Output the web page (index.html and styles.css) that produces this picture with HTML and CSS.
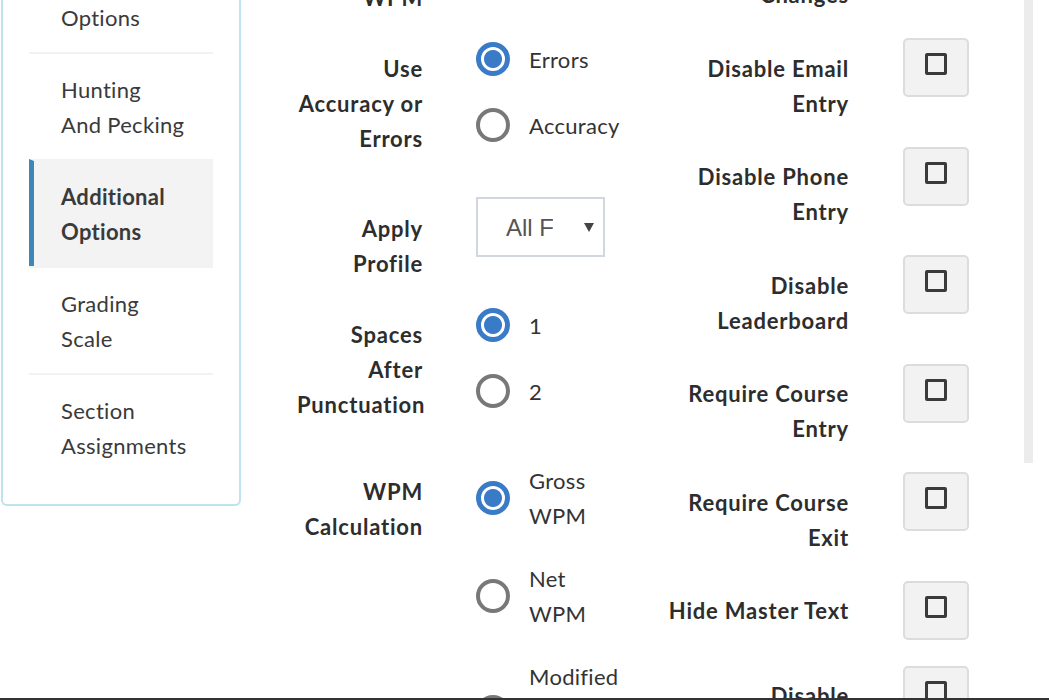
FILE: index.html
```html
<!DOCTYPE html>
<html lang="en">
<head>
    <meta charset="UTF-8">
    <meta name="viewport" content="width=device-width, initial-scale=1.0">
    <title>Lesson Settings - Additional Options</title>
    <link rel="stylesheet" href="styles.css">
</head>
<body>
    <div class="page">
        <aside class="sidebar">
            <ul class="nav">
                <li class="nav-item">Lesson Options</li>
                <li class="nav-item">Hunting<br>And Pecking</li>
                <li class="nav-item active">Additional Options</li>
                <li class="nav-item">Grading Scale</li>
                <li class="nav-item">Section Assignments</li>
            </ul>
        </aside>

        <main class="settings">
            <div class="col col-left">
                <div class="field">
                    <div class="field-label">Minimum WPM</div>
                    <div class="field-control">
                        <div class="text-input">0</div>
                    </div>
                </div>

                <div class="field">
                    <div class="field-label">Use Accuracy or Errors</div>
                    <div class="field-control radio-group">
                        <label class="radio"><span class="radio-dot checked"></span><span class="radio-text">Errors</span></label>
                        <label class="radio"><span class="radio-dot"></span><span class="radio-text">Accuracy</span></label>
                    </div>
                </div>

                <div class="field">
                    <div class="field-label field-label-select">Apply Profile</div>
                    <div class="field-control">
                        <div class="select">
                            <span class="select-value">All Formats</span>
                            <span class="select-arrow"></span>
                        </div>
                    </div>
                </div>

                <div class="field">
                    <div class="field-label">Spaces After Punctuation</div>
                    <div class="field-control radio-group">
                        <label class="radio"><span class="radio-dot checked"></span><span class="radio-text">1</span></label>
                        <label class="radio"><span class="radio-dot"></span><span class="radio-text">2</span></label>
                    </div>
                </div>

                <div class="field">
                    <div class="field-label">WPM Calculation</div>
                    <div class="field-control radio-group narrow">
                        <label class="radio"><span class="radio-dot checked"></span><span class="radio-text">Gross WPM</span></label>
                        <label class="radio"><span class="radio-dot"></span><span class="radio-text">Net WPM</span></label>
                        <label class="radio"><span class="radio-dot"></span><span class="radio-text">Modified Net WPM</span></label>
                    </div>
                </div>
            </div>

            <div class="col col-right">
                <div class="field">
                    <div class="field-label">Allow Profile Changes</div>
                    <div class="field-control"><span class="check-btn"><span class="check-box"></span></span></div>
                </div>
                <div class="field">
                    <div class="field-label">Disable Email Entry</div>
                    <div class="field-control"><span class="check-btn"><span class="check-box"></span></span></div>
                </div>
                <div class="field">
                    <div class="field-label">Disable Phone Entry</div>
                    <div class="field-control"><span class="check-btn"><span class="check-box"></span></span></div>
                </div>
                <div class="field">
                    <div class="field-label">Disable Leaderboard</div>
                    <div class="field-control"><span class="check-btn"><span class="check-box"></span></span></div>
                </div>
                <div class="field">
                    <div class="field-label">Require Course Entry</div>
                    <div class="field-control"><span class="check-btn"><span class="check-box"></span></span></div>
                </div>
                <div class="field">
                    <div class="field-label">Require Course Exit</div>
                    <div class="field-control"><span class="check-btn"><span class="check-box"></span></span></div>
                </div>
                <div class="field">
                    <div class="field-label">Hide Master Text</div>
                    <div class="field-control"><span class="check-btn"><span class="check-box"></span></span></div>
                </div>
                <div class="field">
                    <div class="field-label">Disable Backspace</div>
                    <div class="field-control"><span class="check-btn"><span class="check-box"></span></span></div>
                </div>
            </div>
        </main>
    </div>

    <div class="scroll-thumb"></div>
    <div class="bottom-bar"></div>
</body>
</html>
```

FILE: styles.css
```css
body {
    margin: 0;
    font-family: Lato, "Noto Sans", sans-serif;
    font-size: 22px;
    line-height: 35px;
    letter-spacing: 0.3px;
    color: #333;
    background: #fff;
    overflow: hidden;
}
.page {
    display: flex;
    align-items: flex-start;
    margin-top: -70px;
}

/* side menu */
.sidebar {
    width: 240px;
    box-sizing: border-box;
    margin-left: 1px;
    padding: 15px 26px 24px;
    border: 2px solid #bde3ee;
    border-top: none;
    border-radius: 0 0 6px 6px;
}
.nav {
    list-style: none;
    margin: 0;
    padding: 0;
}
.nav-item {
    border-top: 2px solid #f2f2f2;
    padding: 18px 25px 17px 32px;
    color: #3a3a3a;
}
.nav-item.active {
    background: #f3f3f3;
    border-left: 5px solid #3d87b8;
    padding-left: 27px;
    font-weight: 700;
}

/* form */
.settings {
    display: flex;
    padding-left: 56px;
}
.col-left {
    width: 367px;
    padding-top: 4px;
}
.field {
    display: flex;
    align-items: flex-start;
    margin-bottom: 25px;
}
.field-label {
    width: 126px;
    flex: none;
    text-align: right;
    font-weight: 700;
    letter-spacing: 0.8px;
    color: #2d2d2d;
    padding-top: 11px;
}
.field-label-select {
    padding-top: 14px;
}
.field-control {
    margin-left: 53px;
}

.text-input {
    width: 125px;
    height: 56px;
    border: 2px solid #d1d6e0;
    padding-left: 20px;
    line-height: 56px;
}

.radio {
    display: flex;
    align-items: center;
    margin-bottom: 28px;
}
.radio-dot {
    flex: none;
    width: 34px;
    height: 34px;
    margin: 2px 0;
    box-sizing: border-box;
    border: 4px solid #787878;
    border-radius: 50%;
    background: #fff;
}
.radio-dot.checked {
    border: 5px solid #3a7bc8;
    background: radial-gradient(circle, #3a7bc8 0, #3a7bc8 8.5px, #fff 9.5px);
}
.radio-text {
    margin-left: 19px;
    color: #333;
}
.narrow .radio-text {
    width: 92px;
}

.select {
    display: flex;
    align-items: center;
    width: 129px;
    height: 60px;
    box-sizing: border-box;
    border: 2px solid #d1d6e0;
    padding-left: 28px;
    font-family: "Liberation Sans", Arial, sans-serif;
    font-size: 24px;
    letter-spacing: 0;
    color: #555;
}
.select-value {
    width: 47px;
    flex: none;
    overflow: hidden;
    white-space: nowrap;
}
.select-arrow {
    margin-left: 31px;
    border-left: 5px solid transparent;
    border-right: 5px solid transparent;
    border-top: 9px solid #444;
}

.col-right .field {
    margin-bottom: 26.2px;
}
.col-right .field-label {
    width: 185px;
    padding-top: 12.3px;
}
.col-right .field-control {
    margin-left: 54px;
}
.check-btn {
    display: block;
    width: 66px;
    height: 59px;
    box-sizing: border-box;
    padding-top: 13px;
    background: #f2f2f2;
    border: 2px solid #dcdcdc;
    border-radius: 5px;
}
.check-box {
    display: block;
    width: 22px;
    height: 22px;
    box-sizing: border-box;
    margin: 0 auto;
    border: 3px solid #3a3a3a;
    border-radius: 2px;
}

.scroll-thumb {
    position: absolute;
    top: 0;
    left: 1024px;
    width: 9px;
    height: 463px;
    background: #ececec;
}
.bottom-bar {
    position: fixed;
    left: 0;
    right: 0;
    bottom: 0;
    height: 2px;
    background: #333;
}
```
